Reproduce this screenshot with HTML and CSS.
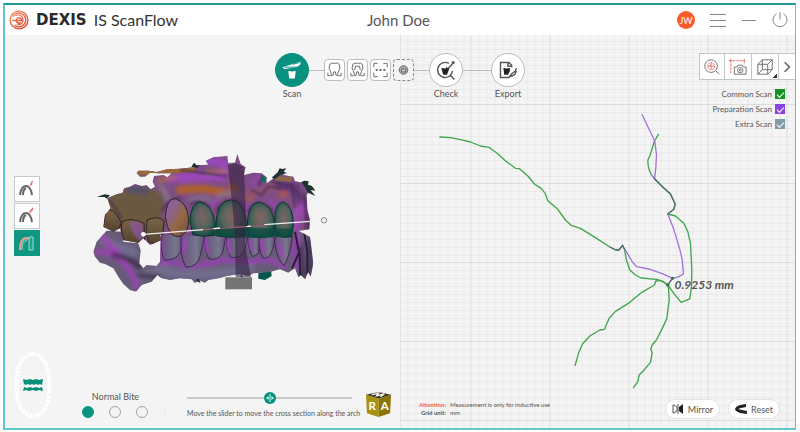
FILE: index.html
```html
<!DOCTYPE html>
<html lang="en">
<head>
<meta charset="utf-8">
<title>DEXIS IS ScanFlow</title>
<meta name="viewport" content="width=device-width, initial-scale=1">
<link rel="stylesheet" href="styles.css">
</head>
<body>
<div class="window">
  <header class="titlebar">
    <div class="brand">
      <svg class="brand-logo" viewBox="0 0 22 22" aria-hidden="true">
        <defs><linearGradient id="lg" x1="0" y1="0" x2="1" y2="1"><stop offset="0" stop-color="#f58a5e"/><stop offset="1" stop-color="#e23c22"/></linearGradient></defs>
        <g fill="none" stroke="url(#lg)">
          <circle cx="11" cy="11" r="9.8" stroke-width="1.5"/>
          <path d="M4 7.500A7.600 7.600 0 1 1 6 16.800" stroke-width="1.500"/>
          <path d="M3.500 11.500h10.500a3 3 0 1 0-1.200 2.400" stroke-width="1.700"/>
          <path d="M7 6.500a5.400 5.400 0 1 1 1.500 9.500" stroke-width="1.200"/>
        </g>
      </svg>
      <span class="brand-name">DEXIS</span>
      <span class="brand-product">IS ScanFlow</span>
    </div>
    <h1 class="patient">John Doe</h1>
    <div class="window-actions">
      <button class="avatar" type="button">JW</button>
      <button class="plain" type="button" aria-label="Menu"><svg viewBox="0 0 16 16"><path d="M0 2.500h16M0 8.500h16M0 14.500h16"/></svg></button>
      <button class="plain" type="button" aria-label="Minimize"><svg viewBox="0 0 16 16"><path d="M1 8.500h14"/></svg></button>
      <button class="plain" type="button" aria-label="Power"><svg viewBox="0 0 16 16"><path d="M8 0v7.500M4.600 1.600a7 7 0 1 0 6.800 0"/></svg></button>
    </div>
  </header>

  <main class="workspace">
    <section class="panel model-panel" aria-label="Scan model">
      <svg class="scene" viewBox="5 35 395 393" preserveAspectRatio="xMidYMid meet" aria-hidden="true">
        <defs>
          <clipPath id="upper"><path d="M82 175L110 163 128 158 132 145 150 140 165 132 185 138 200 136 212 148 225 140 218 125 222 108 250 105 262 112 275 100 235 100 210 98 195 110 180 110 170 100 175 92 205 92 230 96 262 88 300 86 340 82 350 76 385 74 378 62 400 52 442 48 445 75 465 68 472 42 482 72 497 82 492 105 520 98 545 100 560 112 560 130 585 112 600 98 615 106 640 110 645 124 670 128 690 150 680 165 682 210 690 240 688 268 640 275 636 292 330 288 240 285 245 300 210 315 190 295 175 308 128 300 120 265 100 275 70 260 75 225 92 205z"/></clipPath>
          <clipPath id="lower"><path d="M80 272L125 275 130 305 175 310 182 330 178 370 190 385 200 375 230 378 240 365 243 280 640 265 690 290 700 370 692 410 684 395 676 418 662 405 655 412 645 385 625 398 600 388 570 396 545 398 520 400 505 408 480 402 440 408 420 414 385 420 375 428 355 420 345 430 335 418 300 415 270 420 245 415 232 405 215 425 185 435 168 455 150 450 130 432 115 410 100 385 75 372 60 368 45 350 40 335 50 305z"/></clipPath>
          <linearGradient id="brown" x1="0" y1="0" x2="0" y2="1"><stop offset="0" stop-color="#7b6448"/><stop offset="1" stop-color="#54432f"/></linearGradient>
          <linearGradient id="canine" x1="0" y1="0" x2="1" y2="1"><stop offset="0" stop-color="#9259b8"/><stop offset=".35" stop-color="#8c6480"/><stop offset=".6" stop-color="#95673f"/><stop offset="1" stop-color="#635049"/></linearGradient>
          <radialGradient id="green" cx=".5" cy=".45" r=".6"><stop offset="0" stop-color="#7b6462"/><stop offset=".5" stop-color="#57645f"/><stop offset=".85" stop-color="#1f564a"/><stop offset="1" stop-color="#104a40"/></radialGradient>
          <linearGradient id="low" x1="0" y1="0" x2="1" y2="0"><stop offset="0" stop-color="#8a3fa3"/><stop offset=".25" stop-color="#6b6080"/><stop offset=".65" stop-color="#77768f"/><stop offset="1" stop-color="#5b4a6e"/></linearGradient>
          <filter id="b8" x="-20%" y="-20%" width="140%" height="140%"><feGaussianBlur stdDeviation="7"/></filter>
          <filter id="b3" x="-20%" y="-20%" width="140%" height="140%"><feGaussianBlur stdDeviation="2.500"/></filter>
        </defs>
        <g transform="translate(80 140) scale(.3333)">
          <path d="M535 400l38-12 2 20-20 12-20-4z" fill="#07564a"/>
          <g clip-path="url(#lower)">
            <path d="M30 250h690v220H30z" fill="#675b78"/>
            <g filter="url(#b8)" fill="none" stroke-linecap="round">
              <path d="M70 300q50 30 90 35M180 405q60-5 70-25M260 395q100 20 250-10" stroke="#716d8c" stroke-width="28"/>
              <path d="M50 335q60 0 90 45t30 60M70 290q10 25 45 45" stroke="#a03fba" stroke-width="15"/>
              <path d="M245 370q30-10 50 0t60 5 60-12 60 0 60-2 80 18M245 300v50M640 300l10 80" stroke="#9a3fb4" stroke-width="14"/>
              <path d="M100 345q60 10 80 40M175 405l60 5M660 310l10 100M690 300v100" stroke="#3a2a48" stroke-width="13"/>
            </g>
            <g stroke="#3f2a50" stroke-width="3" fill="url(#low)">
              <path d="M244 280q-4 60 10 80 34 2 48-26l10-54z"/>
              <path d="M304 280q-6 70 14 102 36 0 44-40l14-62z"/>
              <path d="M374 280q-2 50 12 76 28 8 42-18l12-58z"/>
              <path d="M440 280q-4 46 12 72 28 6 42-20l12-52z"/>
              <path d="M504 280q-2 44 14 70l18-10 4-60z"/>
              <path d="M538 280q-4 50 10 74 32 8 38-74z"/>
              <path d="M586 280q-8 60 26 98 22-40 26-98z"/>
            </g>
            <g filter="url(#b3)" stroke="#a442bb" stroke-width="8" fill="none"><path d="M312 340l6-45M376 300l8 40M442 300l8 40M508 300l8 30M545 300l6 40M600 310l10 45M652 250l8 70"/></g>
            <path d="M645 275l14 70 2 65M672 275l10 60v70M656 340l-20 45" stroke="#2d1d3a" stroke-width="6" fill="none"/>
          </g>
          <g clip-path="url(#upper)">
            <path d="M40 30h680v320H40z" fill="#7c4d84"/>
            <g filter="url(#b8)" fill="none" stroke-linecap="round">
              <path d="M90 180l90-30 60 20-10 75H110z" fill="#6b593f" stroke="#6b593f" stroke-width="28"/>
              <path d="M150 148l45 5" stroke="#555068" stroke-width="22"/>
              <path d="M380 62l60 8-10 40-130 5M270 115l80-12" stroke="#9c46bb" stroke-width="22"/>
              <path d="M245 140l20 40" stroke="#8a7090" stroke-width="16"/>
              <path d="M300 150q60-10 120 5t40-15" stroke="#b0602c" stroke-width="24"/>
              <path d="M500 160q50 0 65-15t50 20" stroke="#8f4f70" stroke-width="20"/>
              <path d="M380 98l60-4M235 122l50-12" stroke="#b36e3a" stroke-width="10"/>
              <path d="M500 180l15-6M600 165l20-5" stroke="#b85c31" stroke-width="10"/>
              <path d="M330 180q30-14 60 0M415 170q40-20 70 0" stroke="#82728f" stroke-width="12"/>
              <path d="M395 200l15-20M490 195l16 25M520 130l20-20M570 185l20 20" stroke="#9a44b6" stroke-width="12"/>
              <path d="M645 140l20 50M595 135l40 10" stroke="#5d3370" stroke-width="22"/>
              <path d="M650 200v70M668 190l5 40" stroke="#aa48c2" stroke-width="12"/>
              <path d="M685 180v90" stroke="#3c2746" stroke-width="12"/>
            </g>
            <path d="M165 98l60-2 50-4 70-4" stroke="#96683c" stroke-width="16" fill="none"/>
            <path d="M585 116l50 2" stroke="#8c6848" stroke-width="14"/>
            <path d="M545 104l14 8-4 18-14-8z" fill="#0d7a61"/>
            <g filter="url(#b3)" fill="none" stroke="#3c2948" stroke-width="4">
              <path d="M90 180l35 55M245 215q20-45 60-40M330 195q26-25 62 10M405 215q50-70 90 0M502 215q36-50 80 0M515 150l30 15 20-25 40 5M635 130l10 75M672 160l6 82M575 125l60 12M550 108l-15 28M300 90l140 18"/>
            </g>
            <g stroke="#2b231f" stroke-width="3">
              <path d="M78 212q22-14 46 36l-10 26q-34 4-44-14z" fill="url(#brown)"/>
              <path d="M126 246q26-16 66 4l2 50q-20 14-60 4-14-30-8-58z" fill="url(#brown)"/>
              <path d="M202 240q30-14 50 2l-4 58q-20 18-42 6-12-30-4-66z" fill="url(#brown)"/>
            </g>
            <path d="M150 248q30-8 38 10v44q-26 0-38-54z" fill="#8f55b0" opacity=".7" filter="url(#b3)"/>
          </g>
          <path d="M256 230q4-56 30-54 38 12 40 64 2 36-28 50-34 4-42-60z" fill="url(#canine)" stroke="#30231f" stroke-width="3"/>
          <g stroke="#0c312b" stroke-width="3" fill="url(#green)">
            <path d="M330 240q4-54 30-54 36 6 46 64l-2 36q-34 6-66-2z"/>
            <path d="M408 260q0-78 46-80 42 4 46 82l-4 26q-44 8-84 0z"/>
            <path d="M502 250q2-62 36-64 40 10 46 62l-4 40q-42 8-76 0z"/>
            <path d="M584 240q0-52 26-54 30 10 30 70l-6 34q-26 6-48-4z"/>
          </g>
          <path d="M400 262l240 4-4 22q-110 12-230 0z" fill="#0e4b42" opacity=".75"/>
          <g filter="url(#b3)" stroke="#b0606d" stroke-width="4" opacity=".5" fill="none"><path d="M440 205l10 55M470 205l-14 60M530 205l8 50M552 210l-4 40M360 200l6 30"/></g>
          <g fill="#20322f"><path d="M50 171l24-8 16 3-10 10-6-5zM575 113l18-16 6-12 8 2 12-2-8 10 10 4-20 6-16 12zM664 126l10-4 12 2-2 10 12 4 10 14-14-2 14 18-22-10-8-14zM334 80l8-12 8 8 10 0-8 8zM346 420l10-4 6 12-8-2zM480 402l8 8-2 8z"/></g>
          <path d="M443 68l20 0 28 12 6 116-2 120 18 96h-46l-2-110-6-90z" fill="#33203f" opacity=".58"/>
          <path d="M436 412h80v36h-80z" fill="#747575"/>
          <path d="M192 283L370 269M553 254L722 242" stroke="#f3eef5" stroke-width="4"/>
          <path d="M370 269L553 256" stroke="#9b5f69" stroke-width="4"/>
          <path d="M400 266l20-2M500 260l12-2" stroke="#f7eded" stroke-width="4"/>
          <circle cx="190" cy="283" r="7" fill="#fff"/>
          <circle cx="732" cy="241" r="8" fill="#f4f4f4" stroke="#888" stroke-width="3"/>
        </g>
      </svg>

      <div class="model-controls">
        <div class="side-tools">
          <button type="button" aria-label="Point on arch"><svg viewBox="0 0 24 24"><path class="arch" d="M5 18c1-7 3-9 6-9s5 3 6 9M8 18c0-4 1-6 3-7"/><path class="mark" d="M16 5l2-2-1 5-2 1z"/></svg></button>
          <button type="button" aria-label="Line on arch"><svg viewBox="0 0 24 24"><path class="arch" d="M5 18c1-7 3-9 6-9s5 3 6 9M8 18c0-4 1-6 3-7"/><path class="mark" d="M14 8l4-5v3l-3 3z"/></svg></button>
          <button class="active" type="button" aria-label="Cross section"><svg viewBox="0 0 24 24"><path d="M5 19c0-8 3-12 7-12l2 1" stroke="#f4a28d" stroke-width="2" fill="none"/><path d="M7 19c0-6 1-9 5-10M14 6h4v13h-4z" stroke="#95e0d0" fill="#27a18b"/></svg></button>
        </div>
        <div class="model-footer">
          <svg class="arch-map" viewBox="0 0 38 66" aria-label="Arch position">
            <rect x="3" y="2" width="32" height="62" rx="16" ry="24" fill="none" stroke="#fff" stroke-width="4" stroke-dasharray="3.200 .9"/>
            <path d="M9 27l4 1 3-1 3 1 3-1 3 1 4-1-1 6-2-1-2 1-2-1-2 1-2-1-2 1-2-1-2 1-1-1-1 1zM9 39l1-4 3 1 3-1 3 1 3-1 3 1 3-1 1 4-4-1-3 1-3-1-4 1-3-1z" fill="#078f7c"/>
          </svg>
          <fieldset class="bite">
            <legend>Normal Bite</legend>
            <div class="bite-options">
              <input type="radio" name="bite" aria-label="Normal bite" checked>
              <input type="radio" name="bite" aria-label="Second bite">
              <input type="radio" name="bite" aria-label="Third bite">
            </div>
          </fieldset>
          <div class="slice">
            <div class="slice-track">
              <input id="slice" type="range" min="0" max="100" value="50">
              <svg viewBox="0 0 12 12" aria-hidden="true"><path d="M6 2v8" stroke-width="1"/><path d="M4.500 4L2 6l2.500 2zM7.500 4L10 6 7.500 8z"/></svg>
            </div>
            <label for="slice">Move the slider to move the cross section along the arch</label>
          </div>
          <svg class="cube" viewBox="0 0 28 28" role="img" aria-label="Orientation cube">
            <path d="M1 4L14 1l13 3-13 4z" fill="#393525"/><path d="M7 4l7-2-2 3 8-2-4 3" stroke="#f5f4ed" stroke-width="1.500" fill="none"/>
            <path d="M1 4l13 4v19L2 23z" fill="#a8910e"/><path d="M14 8l13-4-1 19-12 4z" fill="#8a7505"/>
            <text x="7.500" y="20">R</text><text x="20.500" y="20">A</text>
          </svg>
        </div>
      </div>
    </section>

    <section class="panel section-panel" aria-label="Cross section">
      <svg class="scene" viewBox="400 35 395 393" preserveAspectRatio="xMidYMid slice">
        <defs>
          <pattern id="grid" x="470" y="262" width="79" height="79" patternUnits="userSpaceOnUse">
            <path d="M8.500 0v79M16.500 0v79M24.500 0v79M32.500 0v79M40.500 0v79M48.500 0v79M56.500 0v79M64.500 0v79M72.500 0v79M0 8.500h79M0 16.500h79M0 24.500h79M0 32.500h79M0 40.500h79M0 48.500h79M0 56.500h79M0 64.500h79M0 72.500h79" stroke="#eaeaea"/>
            <path d="M.5 0v79M0 .5h79" stroke="#dcdddd"/>
          </pattern>
        </defs>
        <rect x="0" y="0" width="1200" height="900" fill="url(#grid)"/>
        <g transform="translate(420 100) scale(.3333)" fill="none" stroke-width="4" stroke-linejoin="round" stroke-linecap="round">
          <g stroke="#3fa54c">
            <path d="M58 111L90 113 120 119 150 126 180 138 205 142 230 160 258 185 285 205 297 206 322 228 342 252 362 265 374 280 382 302 412 328 435 360 452 376 480 385 520 410 568 441 586 450 596 450 606 436 612 448 618 480 628 510 645 525 662 534 708 538 727 544 742 555 760 580 782 607 808 597 813 560 814 510 810 430 802 395 790 370 765 348 742 342"/>
            <path d="M714 103L702 123 688 168 682 180Q682 216 702 236L726 260 750 282 764 312 760 328 742 342"/>
            <path d="M742 555L720 541 706 543 702 555 664 577 628 607 584 635 566 655 552 688 538 690 508 708 486 732 474 760 464 796"/>
            <path d="M744 560L746 600 739 656 725 686 709 718 695 735 691 747 695 759 690 787 668 813 656 825 652 845 639 863"/>
          </g>
          <path d="M665 44L703 124 708 164 706 204 702 236M742 342L760 388 778 448 785 478 789 522 775 530 757 535 725 521 685 507 648 500 636 486 612 446" stroke="#a273df"/>
          <path d="M702 236L726 260 750 282 764 312 760 328 742 342M568 441L586 450 596 450 606 436 612 448" stroke="#526b77"/>
          <path d="M742 555l14-20" stroke="#555"/>
          <circle cx="756" cy="535" r="3" fill="#397344" stroke="#397344"/><circle cx="742" cy="555" r="3" fill="#217b32" stroke="#217b32"/>
        </g>
        <text class="measure" x="674" y="289">0.9253 mm</text>
      </svg>

      <div class="section-controls">
        <div class="view-options">
          <div class="toolbar">
            <button type="button" aria-label="Zoom"><svg viewBox="0 0 20 20"><circle cx="9" cy="9" r="7"/><path d="M14 14l4 4"/><path class="red" d="M9 5v8M5 9h8"/><circle class="red" cx="9" cy="9" r="4" stroke-dasharray="2 1"/></svg></button>
            <button type="button" aria-label="Capture"><svg viewBox="0 0 20 20"><path class="red" d="M2 17V3h15v4M0 3h4M2 1v4M17 1v4" stroke-dasharray="3 1"/><path d="M6 10h3l1-2h5l1 2h3v8H6z"/><circle cx="12.500" cy="13.500" r="3"/><circle cx="12.500" cy="13.500" r="1"/></svg></button>
            <button class="more" type="button" aria-label="View cube"><svg viewBox="0 0 20 20"><path d="M2 7l5-5h11v11l-5 5H2zM2 7h11v11M13 7l5-5M7 2v11h11M2 18l5-5"/></svg></button>
            <button class="next" type="button" aria-label="More tools"><svg viewBox="0 0 10 20"><path d="M2 4l6 6-6 6"/></svg></button>
          </div>
          <div class="layers">
            <label>Common Scan <input class="common" type="checkbox" checked></label>
            <label>Preparation Scan <input class="preparation" type="checkbox" checked></label>
            <label>Extra Scan <input class="extra" type="checkbox" checked></label>
          </div>
        </div>
        <div class="section-footer">
          <dl class="notes">
            <dt class="attention">Attention:</dt><dd>Measurement is only for inductive use</dd>
            <dt>Grid unit:</dt><dd>mm</dd>
          </dl>
          <div class="section-actions">
            <button type="button"><svg viewBox="0 0 12 12"><path d="M1 2v8h1l3-2V4L2 2zM6 1v10" fill="none" stroke="#555"/><path d="M7 4l4-3v10L7 8z" fill="#222"/></svg>Mirror</button>
            <button type="button"><svg viewBox="0 0 12 12"><path d="M11 1v3L6 5 3 6l4 1 5 1v3L5 10Q0 8 0 6q1-3 5-4z" fill="#222"/></svg>Reset</button>
          </div>
        </div>
      </div>
    </section>

    <nav class="workflow" aria-label="Workflow">
      <button class="step current" type="button">
        <span class="disc"><svg viewBox="0 0 34 34"><path d="M7 14l10-3 9-3v3l-4 3-13 2z" fill="#fff"/><path d="M9 14h15M18 11l7-2" stroke="#08917e"/><path d="M13 18q4 1 8 0l-1 8h-6z" fill="#fff"/></svg></span>Scan
      </button>
      <span class="link short"></span>
      <div class="scans">
        <button type="button" aria-label="Lower jaw"><svg viewBox="0 0 20 20"><path d="M5 4q2-2 5-1 4-1 5 1 2 4-1 8l-1 4q-2 1-2-4h-2q0 5-2 4l-1-4Q3 8 5 4zM3 13v3h3M17 13v3h-3"/></svg></button>
        <button type="button" aria-label="Upper jaw"><svg viewBox="0 0 20 20"><path d="M5 4q2-2 5-1 4-1 5 1 2 4-1 8l-1 4q-2 1-2-4h-2q0 5-2 4l-1-4Q3 8 5 4zM7 10l1-4h4l1 4M3 13v3h3M17 13v3h-3"/></svg></button>
        <button type="button" aria-label="Bite scan"><svg viewBox="0 0 20 20"><path d="M3 7V3h4M13 3h4v4M17 13v4h-4M7 17H3v-4"/><path d="M5 10h10" stroke-width="2" stroke-dasharray="2 2"/></svg></button>
        <button class="optional" type="button" aria-label="Additional scan"><svg viewBox="0 0 20 20"><circle cx="10" cy="10" r="4.500" fill="#aaa"/><path d="M8 9v3h4V9z" fill="#ddd"/></svg></button>
      </div>
      <span class="link short"></span>
      <button class="step" type="button">
        <span class="disc"><svg viewBox="0 0 34 34"><path d="M20 10a8 8 0 1 0 4 8M21 22l5 5M17 14l2 2 7-8M23 8l3 2" fill="none" stroke="#555" stroke-width="1.500"/><path d="M12 15q4 1 8 0v2l-2 5h-4z" fill="#222"/></svg></span>Check
      </button>
      <span class="link"></span>
      <button class="step" type="button">
        <span class="disc"><svg viewBox="0 0 34 34"><path d="M21 14v-2l-3-3H9v16h9M17 9v4h4M18 25l3-4 4-3 1-3M20 24l4-2 2-4" fill="none" stroke="#555" stroke-width="1.500"/><path d="M12 15q3 1 7 0v3l-2 4h-4z" fill="#222"/></svg></span>Export
      </button>
    </nav>
  </main>
</div>
</body>
</html>
```

FILE: styles.css
```css
* { box-sizing: border-box; }

body {
  margin: 0;
  background: #fff;
  color: #555;
  font-family: Lato, "Liberation Sans", sans-serif;
}

button {
  margin: 0;
  padding: 0;
  border: 0;
  background: none;
  color: inherit;
  font: inherit;
  cursor: pointer;
}

svg { display: block; }

.window {
  display: grid;
  grid-template-rows: auto 1fr;
  min-height: calc(100vh - 5px);
  margin: 3px 4px 2px 3px;
  border: 2px solid #62c6c9;
  border-top-color: #229a9c;
  border-right-width: 1px;
}

/* Title bar */
.titlebar {
  display: grid;
  grid-template-columns: 1fr auto 1fr;
  align-items: center;
  height: 30px;
  padding: 0 7px 0 4px;
}

.brand { display: flex; align-items: center; gap: 7px; }
.brand-logo { width: 20px; height: 20px; }
.brand-name { font: 700 15px/20px "DejaVu Sans", sans-serif; color: #2b2929; }
.brand-product { font: 400 16px/20px Lato, sans-serif; color: #333; }
.patient { margin: 0; font-size: 15px; line-height: 20px; font-weight: 400; }

.window-actions {
  display: flex;
  justify-content: flex-end;
  align-items: center;
  gap: 15px;
}

.avatar {
  width: 18px;
  height: 18px;
  border-radius: 50%;
  background: #fb5a2b;
  color: #fff;
  font-size: 9px;
}

.plain svg { width: 16px; height: 16px; fill: none; stroke: #858585; stroke-width: 1; }

/* Workspace: two panels with the workflow laid over both */
.workspace {
  display: grid;
  grid-template-columns: 1fr 1fr;
  grid-template-rows: 1fr;
}

.panel {
  display: grid;
  grid-template: minmax(0, 1fr) / minmax(0, 1fr);
  grid-row: 1;
  background: #f4f4f4;
}

.panel > * { grid-area: 1 / 1; }
.model-panel { grid-column: 1; }
.section-panel { grid-column: 2; border-left: 1px solid #e3e3e3; }

.scene { width: 100%; height: 100%; min-height: 0; }

.measure { font: italic 700 12px Lato, sans-serif; fill: #555; }

/* Model panel */
.model-controls {
  display: grid;
  grid-template-rows: 1fr auto;
  padding: 44px 8px 10px 9px;
}

.side-tools {
  display: flex;
  flex-direction: column;
  gap: 1px;
  align-self: center;
  width: 26px;
}

.side-tools button {
  height: 26px;
  border: 1px solid #c9c9c9;
  background: #fff;
}

.side-tools .active { border-color: #109782; background: #109782; }
.side-tools svg { width: 24px; height: 24px; }
.arch { fill: none; stroke: #666; stroke-width: 2; }
.mark { fill: #f16a68; }

.model-footer { display: flex; align-items: flex-end; }
.arch-map { width: 38px; height: 66px; }

.bite {
  margin: 0 0 0 30px;
  padding: 0;
  border: 0;
  text-align: center;
}

.bite legend { margin: 0; padding: 0 16px 3px 0; width: 100%; font-size: 9px; line-height: 12px; }

.bite-options {
  display: flex;
  gap: 15px;
  padding: 0 16px 0 0;
  border-right: 1px solid #e9e9e9;
}

.bite input {
  appearance: none;
  width: 12px;
  height: 12px;
  margin: 0;
  border: 1px solid #a3a3a3;
  border-radius: 50%;
}

.bite input:checked { border-color: #079580; background: #079580; }

.slice {
  display: grid;
  grid-template-columns: minmax(0, 1fr);
  flex: 1;
  gap: 4px;
  min-width: 0;
  margin: 0 13px 0 22px;
}

.slice label { font-size: 7px; line-height: 10px; white-space: nowrap; }
.slice-track { display: grid; align-items: center; }
.slice-track > * { grid-area: 1 / 1; }

.slice-track input {
  appearance: none;
  width: 100%;
  height: 12px;
  margin: 0;
  background: linear-gradient(#c8c8c8, #c8c8c8) center / 100% 2px no-repeat;
}

.slice-track input::-webkit-slider-thumb {
  appearance: none;
  width: 12px;
  height: 12px;
  border-radius: 50%;
  background: #07917d;
}

.slice-track svg {
  justify-self: center;
  width: 12px;
  height: 12px;
  fill: #d8fff7;
  stroke: #d8fff7;
  stroke-width: 0;
  pointer-events: none;
}

.cube { width: 27px; height: 27px; }
.cube text { fill: #fff; font: 700 12px Lato, sans-serif; text-anchor: middle; }

/* Cross-section panel */
.section-controls {
  display: flex;
  flex-direction: column;
  justify-content: space-between;
  padding: 18px 0 9px 18px;
}

.view-options { display: flex; flex-direction: column; align-items: flex-end; gap: 9px; }

.toolbar { display: flex; border: 1px solid #c4c4c4; border-right: 0; background: #fff; }

.toolbar button {
  display: grid;
  place-items: center;
  width: 27px;
  height: 25px;
  border-left: 1px solid #c4c4c4;
}

.toolbar button:first-child { width: 24px; border-left: 0; }
.toolbar .next { width: 17px; }
.toolbar svg { height: 18px; fill: none; stroke: #666; stroke-width: 1; }
.toolbar .next svg { height: 16px; stroke-width: 2; }
.toolbar .red { stroke: #ef625b; }

.toolbar .more {
  background: linear-gradient(135deg, transparent 50%, #333 50%) right 1px bottom 1px / 4px 4px no-repeat;
}

.layers {
  display: flex;
  flex-direction: column;
  align-items: flex-end;
  gap: 5px;
  padding-right: 10px;
}

.layers label {
  display: flex;
  align-items: center;
  gap: 3px;
  font-size: 8px;
  line-height: 10px;
}

.layers input {
  appearance: none;
  display: grid;
  place-items: center;
  width: 10px;
  height: 10px;
  margin: 0;
}

.layers input:checked::before {
  content: "";
  width: 6px;
  height: 3px;
  border: solid #fff;
  border-width: 0 0 1px 1px;
  transform: rotate(-45deg);
}

.common { background: #119522; }
.preparation { background: #8a43df; }
.extra { background: #829ba4; }

.section-footer {
  display: flex;
  align-items: center;
  justify-content: space-between;
  padding-right: 15px;
}

.notes {
  display: grid;
  grid-template-columns: auto auto;
  gap: 0 4px;
  margin: 0;
  font-size: 6px;
  line-height: 8px;
}

.notes dt { font-weight: 700; text-align: right; }
.notes dd { margin: 0; }
.notes .attention { color: #f5623d; }

.section-actions { display: flex; gap: 8px; }

.section-actions button {
  display: flex;
  align-items: center;
  gap: 4px;
  height: 20px;
  padding: 0 6px;
  border: 1px solid #e2e2e2;
  border-radius: 10px;
  background: #fff;
  font-size: 9px;
}

.section-actions svg { width: 12px; height: 12px; }

/* Workflow */
.workflow {
  display: flex;
  grid-area: 1 / 1 / 2 / 3;
  align-self: start;
  justify-self: center;
  margin-top: 18px;
}

.step {
  display: flex;
  flex-direction: column;
  align-items: center;
  gap: 1px;
  width: 34px;
  font-size: 9px;
  line-height: 12px;
}

.disc {
  width: 34px;
  height: 34px;
  border: 1px solid #bdbdbd;
  border-radius: 50%;
  background: #fff;
}

.current .disc { border-color: #08917e; background: #08917e; }
.disc svg { width: 32px; height: 32px; }

.link { width: 28px; height: 1px; margin-top: 17px; background: #bdbdbd; }
.link.short { width: 15px; }

.scans { display: flex; gap: 2px; margin-top: 6px; }

.scans button {
  width: 21px;
  height: 22px;
  border: 1px solid #bdbdbd;
  border-radius: 4px;
  background: #fff;
}

.scans .optional { border: 1px dashed #888; background: #f4f4f4; }
.scans svg { width: 19px; height: 20px; fill: none; stroke: #666; stroke-width: 1; }
```
